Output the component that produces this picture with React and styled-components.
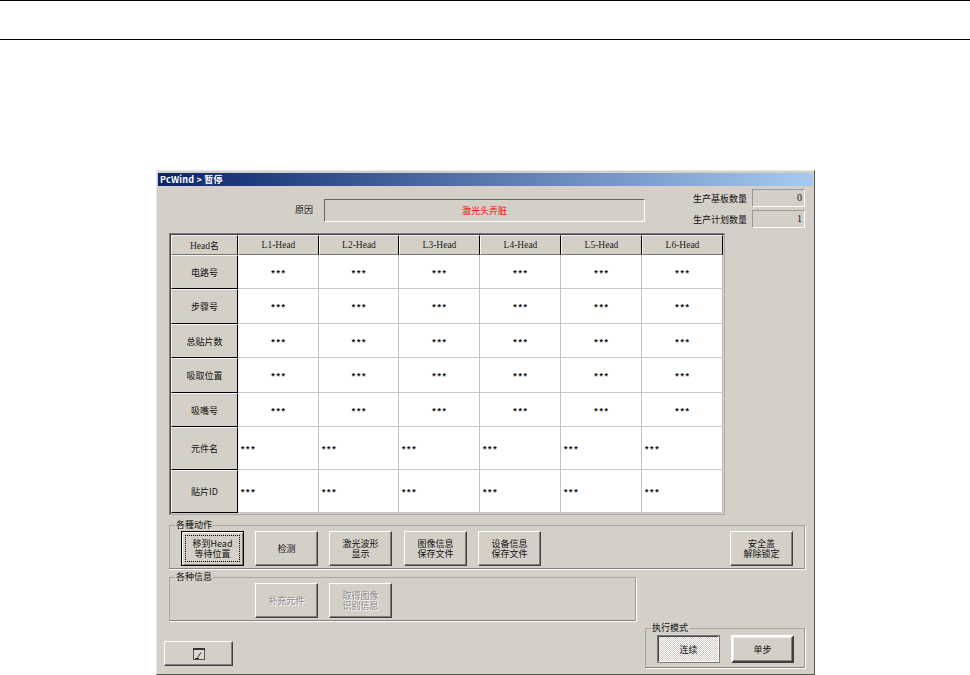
import React from "react";
import styled, { createGlobalStyle, css } from "styled-components";

const Global = createGlobalStyle`
  html, body { margin: 0; padding: 0; background: #fff; }
  body { font-family: "Noto Sans CJK SC", "Liberation Sans", sans-serif; font-size: 9px; color: #111; }
  * { box-sizing: border-box; }
`;

const Page = styled.div`
  width: 970px;
  height: 675px;
  overflow: hidden;
`;

const TopBand = styled.div`
  height: 40px;
  border-top: 1px solid #000;
  border-bottom: 1px solid #000;
`;

const Dialog = styled.div`
  width: 659px;
  height: 505px;
  margin: 130px 0 0 156px;
  padding: 2px 1px 0 1px;
  background: #d4d0c8;
  border: 1px solid;
  border-color: #e8e8e8 #555 #555 #e8e8e8;
  display: flex;
  flex-direction: column;
`;

const TitleBar = styled.div`
  height: 13px;
  flex: none;
  padding-left: 2px;
  background: linear-gradient(90deg, #0a246a, #a6caf0);
  color: #fff;
  font-weight: 700;
  font-size: 9px;
  line-height: 13px;
  letter-spacing: 0.2px;
`;

const Header = styled.div`
  height: 47px;
  flex: none;
  display: flex;
`;

const ReasonLabel = styled.div`
  margin: 14px 0 0 137px;
  width: 29px;
  line-height: 19px;
  height: 19px;
`;

const ReasonBox = styled.div`
  margin: 13px 0 0 0;
  width: 321px;
  height: 23px;
  border: 1px solid;
  border-color: #666 #fff #fff #666;
  color: #f00;
  display: flex;
  align-items: center;
  justify-content: center;
`;

const Counters = styled.div`
  margin: 3px 0 0 48px;
  display: flex;
  flex-direction: column;
  gap: 3px;
`;

const CounterRow = styled.div`
  display: flex;
  align-items: center;
  height: 18px;
  gap: 5px;
`;

const CounterValue = styled.div`
  width: 53px;
  height: 18px;
  border: 1px solid;
  border-color: #999 #fff #fff #999;
  text-align: right;
  padding-right: 2px;
  line-height: 16px;
  font-family: "Liberation Serif", serif;
  font-size: 10px;
`;

const TableFrame = styled.div`
  flex: none;
  width: 556px;
  height: 282px;
  margin-left: 11px;
  border: 1px solid;
  border-color: #808080 #a8a8a8 #a8a8a8 #808080;
  padding: 1px;
  display: grid;
  grid-template-columns: 67px 81px 80px 81px 81px 81px 81px;
  grid-template-rows: 20px 34px 35px 34px 35px 34px 43px 43px;
  box-shadow: inset 1px 1px 0 #404040;
`;

const HeadCell = styled.div`
  background: #d4d0c8;
  border-right: 1px solid #000;
  border-bottom: 1px solid ${(p) => (p.$dark ? "#000" : "#777")};
  border-left: 1px solid #f4f4f4;
  border-top: 1px solid #f4f4f4;
  display: flex;
  align-items: center;
  justify-content: center;
`;

const HeadSerif = styled.span`
  font-family: "Liberation Serif", serif;
  font-size: 9.5px;
  color: #222;
`;

const Cell = styled.div`
  background: #fff;
  border-right: 1px solid #c0c0c0;
  border-bottom: 1px solid #c8c8c8;
  display: flex;
  align-items: center;
  justify-content: ${(p) => (p.$left ? "flex-start" : "center")};
  padding: 6px 0 0 ${(p) => (p.$left ? "2px" : "0")};
  font-family: "Liberation Mono", monospace;
  font-size: 9px;
  font-weight: 700;
  letter-spacing: -0.3px;
  color: #111;
`;

const Group = styled.fieldset`
  margin: ${(p) => p.$margin || "0"};
  padding: 0;
  width: ${(p) => p.$w}px;
  height: ${(p) => p.$h}px;
  flex: none;
  border: 1px solid;
  border-color: #aaa7a0 #999 #808080 #aaa7a0;
  box-shadow: 1px 1px 0 #fff;
  min-inline-size: 0;
`;

const Legend = styled.legend`
  padding: 0 1px;
  margin-left: 5px;
  font-size: 9px;
  line-height: 10px;
  height: 10px;
`;

const ButtonRow = styled.div`
  display: flex;
  padding-left: ${(p) => p.$pad}px;
  margin-top: ${(p) => p.$top}px;
  gap: 11px;
`;

const bevel = css`
  background: #d4d0c8;
  border: 1px solid;
  border-color: #fff #404040 #404040 #fff;
  box-shadow: inset -1px -1px 0 #808080;
`;

const Btn = styled.button`
  ${bevel}
  width: 63px;
  height: 35px;
  flex: none;
  padding: 0;
  margin: 0 0 0 ${(p) => p.$ml || 0}px;
  font-family: inherit;
  font-size: 9px;
  line-height: 9.5px;
  color: ${(p) => (p.disabled ? "#8a8a8a" : "#111")};
  text-shadow: ${(p) => (p.disabled ? "1px 1px 0 #fff" : "none")};
  position: relative;
  white-space: pre-line;
`;

const FocusBtn = styled(Btn)`
  border-color: #000;
  box-shadow: inset 1px 1px 0 #fff, inset -1px -1px 0 #808080;
  &::after {
    content: "";
    position: absolute;
    inset: 3px;
    border: 1px dotted #000;
  }
`;

const BottomRow = styled.div`
  display: flex;
  justify-content: space-between;
  align-items: flex-start;
  padding-right: 8px;
  margin-top: 2px;
`;

const IconBtn = styled.button`
  ${bevel}
  width: 69px;
  height: 25px;
  margin: 18px 0 0 6px;
  padding: 0;
  display: flex;
  align-items: center;
  justify-content: center;
`;

const ModeBtn = styled.button`
  width: 63px;
  height: 28px;
  padding: 0;
  font-family: inherit;
  font-size: 9px;
  color: #111;
  border: 2px solid;
  ${(p) =>
    p.$active
      ? css`
          border-color: #444 #fff #fff #444;
          background-color: #fff;
          background-image: conic-gradient(#cfcbc3 25%, #fff 0 50%, #cfcbc3 0 75%, #fff 0);
          background-size: 2px 2px;
          outline: 1px solid #777;
          outline-offset: -1px;
        `
      : css`
          background: #d4d0c8;
          border-color: #fff #404040 #404040 #fff;
          box-shadow: inset -1px -1px 0 #808080, inset 1px 1px 0 #eee;
        `}
`;

const ModeRow = styled.div`
  display: flex;
  gap: 11px;
  padding-left: 11px;
  margin-top: 2px;
`;

const columns = ["L1-Head", "L2-Head", "L3-Head", "L4-Head", "L5-Head", "L6-Head"];
const rows = [
  { label: "电路号" },
  { label: "步骤号" },
  { label: "总贴片数" },
  { label: "吸取位置" },
  { label: "吸嘴号" },
  { label: "元件名", left: true },
  { label: "贴片ID", left: true },
];

function StateIcon() {
  return (
    <svg width="12" height="12" viewBox="0 0 12 12">
      <rect x="0.5" y="0.5" width="11" height="11" fill="#dcd9d2" stroke="#555" />
      <rect x="0" y="0" width="12" height="2" fill="#333" />
      <path d="M2 10.5H6M4.5 9.5L8 4.5" stroke="#222" fill="none" />
    </svg>
  );
}

export default function App() {
  return (
    <Page>
      <Global />
      <TopBand />
      <Dialog>
        <TitleBar>PcWind &gt; 暂停</TitleBar>
        <Header>
          <ReasonLabel>原因</ReasonLabel>
          <ReasonBox>激光头弄脏</ReasonBox>
          <Counters>
            <CounterRow>
              <span>生产基板数量</span>
              <CounterValue>0</CounterValue>
            </CounterRow>
            <CounterRow>
              <span>生产计划数量</span>
              <CounterValue>1</CounterValue>
            </CounterRow>
          </Counters>
        </Header>
        <TableFrame>
          <HeadCell>
            <span><HeadSerif>Head</HeadSerif>名</span>
          </HeadCell>
          {columns.map((c) => (
            <HeadCell key={c}>
              <HeadSerif>{c}</HeadSerif>
            </HeadCell>
          ))}
          {rows.map((r) => (
            <React.Fragment key={r.label}>
              <HeadCell $dark>{r.label}</HeadCell>
              {columns.map((c) => (
                <Cell key={c} $left={r.left}>***</Cell>
              ))}
            </React.Fragment>
          ))}
        </TableFrame>
        <Group $w={636} $h={49} $margin="5px 0 0 11px">
          <Legend>各種动作</Legend>
          <ButtonRow $pad={11} $top={1}>
            <FocusBtn>{"移到Head\n等待位置"}</FocusBtn>
            <Btn>检测</Btn>
            <Btn>{"激光波形\n显示"}</Btn>
            <Btn $ml={1}>{"图像信息\n保存文件"}</Btn>
            <Btn>{"设备信息\n保存文件"}</Btn>
            <Btn $ml={178}>{"安全盖\n解除锁定"}</Btn>
          </ButtonRow>
        </Group>
        <Group $w={467} $h={49} $margin="3px 0 0 11px">
          <Legend>各种信息</Legend>
          <ButtonRow $pad={85} $top={1}>
            <Btn disabled>补充元件</Btn>
            <Btn disabled>{"取得图像\n识别信息"}</Btn>
          </ButtonRow>
        </Group>
        <BottomRow>
          <IconBtn aria-label="状态">
            <StateIcon />
          </IconBtn>
          <Group $w={160} $h={45}>
            <Legend>执行模式</Legend>
            <ModeRow>
              <ModeBtn $active>连续</ModeBtn>
              <ModeBtn>单步</ModeBtn>
            </ModeRow>
          </Group>
        </BottomRow>
      </Dialog>
    </Page>
  );
}
